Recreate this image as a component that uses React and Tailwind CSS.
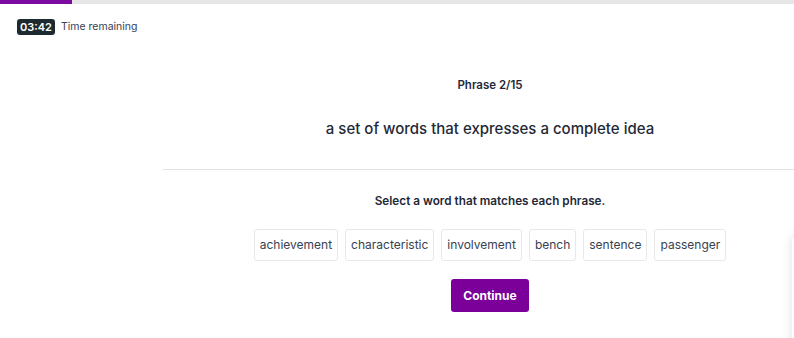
export default function App() {
  const words = ["achievement", "characteristic", "involvement", "bench", "sentence", "passenger"];

  return (
    <div className="relative w-[794px] h-[338px] overflow-hidden bg-white" style={{ fontFamily: "Inter, 'Liberation Sans', sans-serif" }}>
      {/* progress */}
      <div className="h-[4px] w-full bg-[#e6e6e6]">
        <div className="h-full w-[72px] bg-[#7a0aa0]" />
      </div>

      {/* timer */}
      <div className="flex items-center gap-[6px] pl-[17px] pt-[15px]">
        <span className="rounded-[3px] bg-[#1d2a2f] px-[3px] py-[1px] text-[11px] font-semibold leading-[14px] text-white">03:42</span>
        <span className="text-[10.5px] text-[#374151]">Time remaining</span>
      </div>

      {/* main */}
      <div className="ml-[163px] w-[654px]">
        <div className="flex flex-col items-center pt-[42px]">
          <p className="text-[11.5px] font-semibold leading-[16px] text-[#1f2937]">Phrase 2/15</p>
          <p className="mt-[26px] text-[15px] font-medium leading-[20px] text-[#1f2937]">a set of words that expresses a complete idea</p>
        </div>
        <div className="mt-[30px] h-px w-full bg-[#e2e2e2]" />
        <div className="flex flex-col items-center">
          <p className="mt-[23px] text-[11.75px] font-semibold leading-[16px] text-[#1f2937]">Select a word that matches each phrase.</p>
          <div className="mt-[20px] flex gap-[7px]">
            {words.map((w) => (
              <button key={w} className="h-[32px] rounded-[3px] border border-[#e8e8e8] bg-white px-[5px] text-[12px] text-[#374151]">
                {w}
              </button>
            ))}
          </div>
          <button className="mt-[18px] h-[33px] w-[78px] rounded-[3px] bg-[#7b0099] text-[12px] font-bold text-white">Continue</button>
        </div>
      </div>

      {/* offscreen panel shadow */}
      <div className="absolute left-[792px] top-[235px] h-[200px] w-[200px] rounded-[6px] bg-white shadow-[0_0_12px_rgba(0,0,0,0.12)]" />
    </div>
  );
}
